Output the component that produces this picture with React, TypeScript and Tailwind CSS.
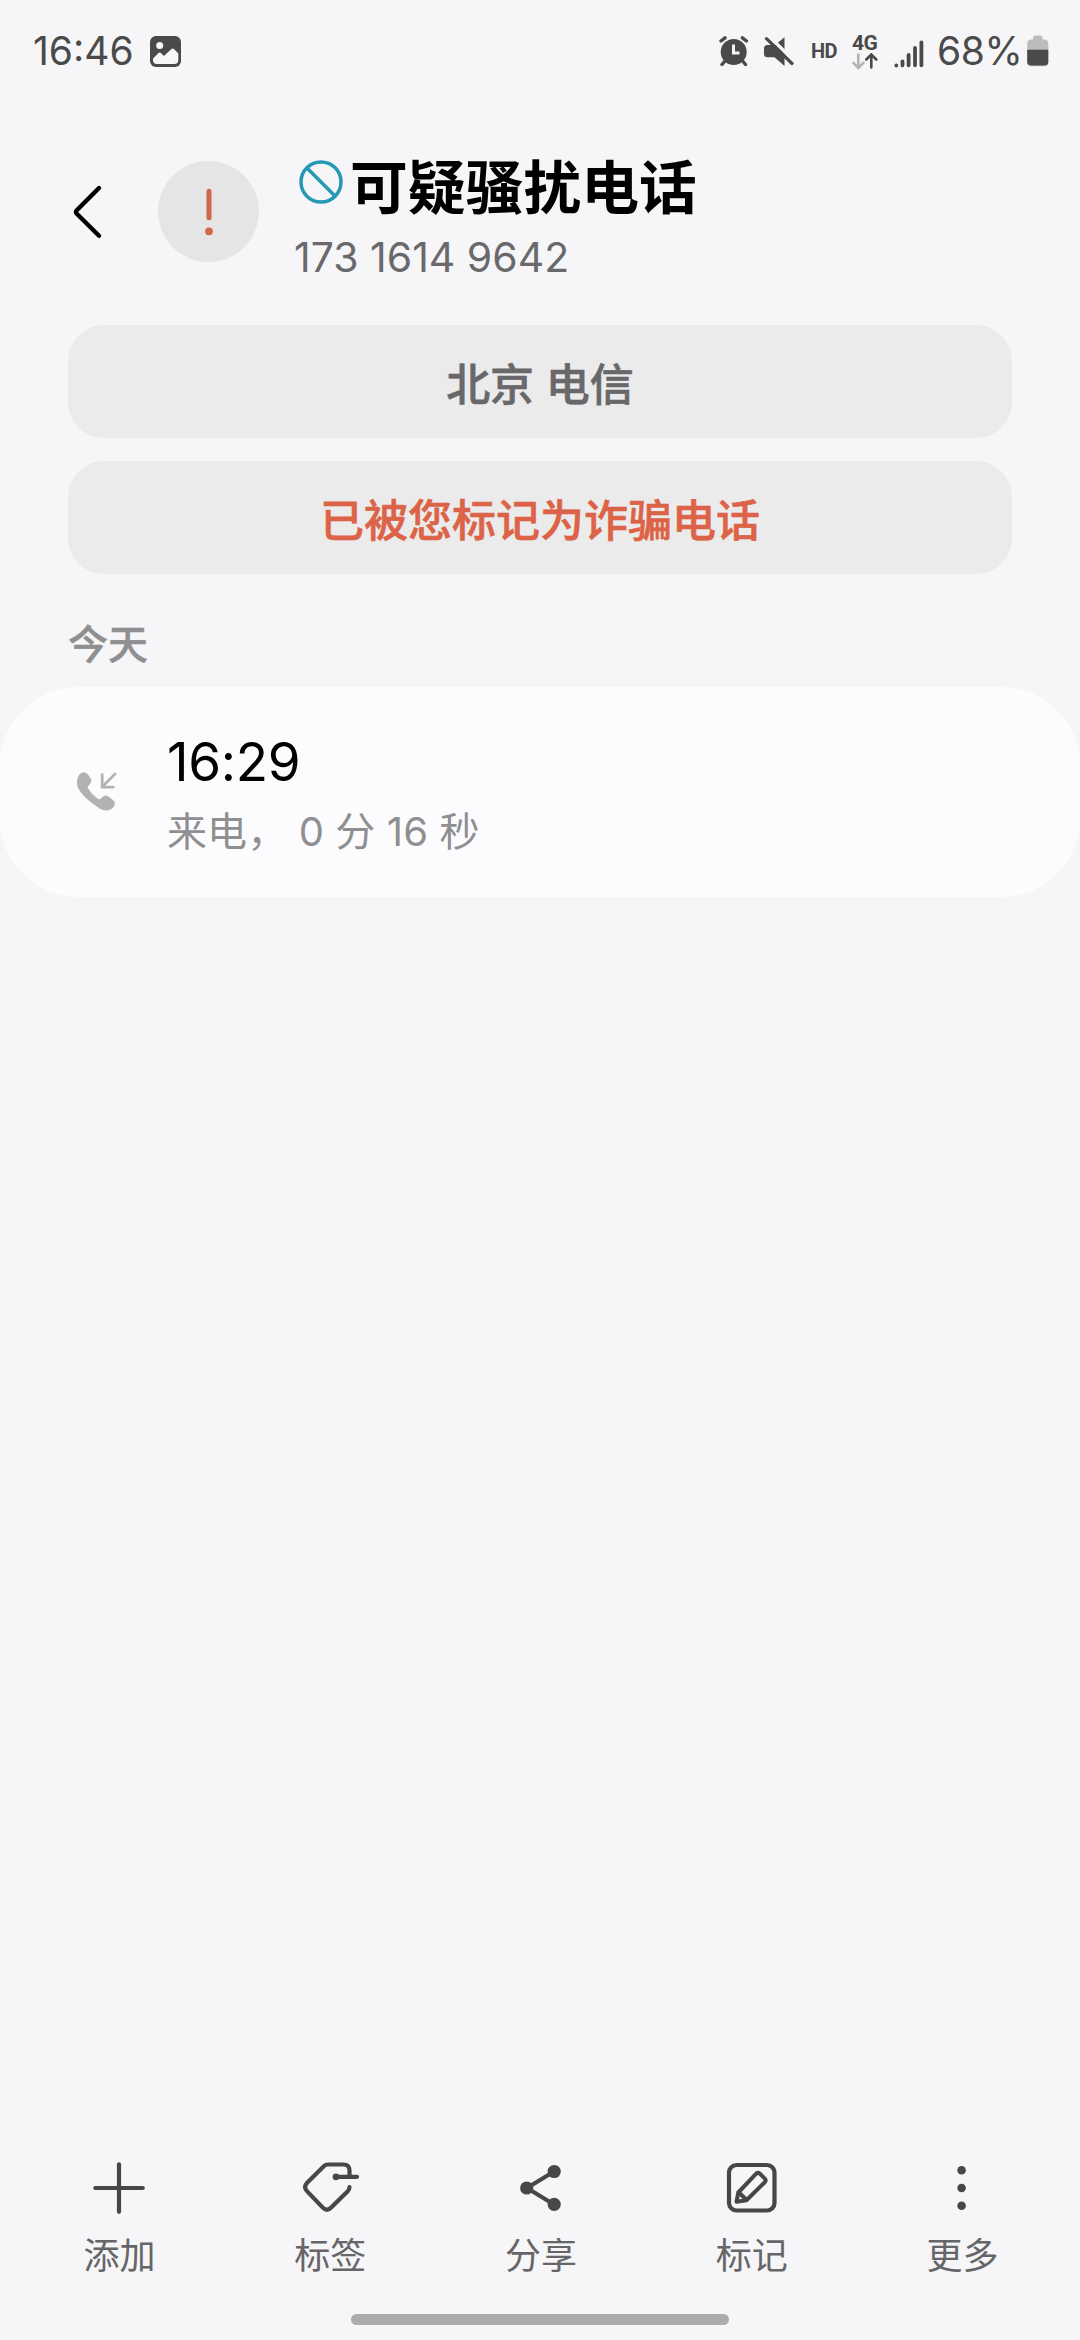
import type { ReactNode } from 'react';

const actions: { label: string; icon: ReactNode }[] = [
  {
    label: '添加',
    icon: <path d="M6.3 30h47.5M30 6.3v47.5" />,
  },
  {
    label: '标签',
    icon: (
      <>
        <path d="M49.5 18v-5.5q0-6-6-6H28q-2.5 0-4.2 1.7L7.2 24.8q-4.2 4.2 0 8.6l15.6 16.2q4.2 4.2 8.4 0l16.3-16q2-2 2-4.6" />
        <path d="M36 18.8h21" />
        <circle cx="36" cy="18.8" r="3.4" fill="currentColor" stroke="none" />
      </>
    ),
  },
  {
    label: '分享',
    icon: (
      <>
        <path d="M43 13.5 16 30l27 16.5" />
        <g fill="currentColor" stroke="none">
          <circle cx="43.2" cy="13.5" r="6.6" />
          <circle cx="15.7" cy="30" r="6.6" />
          <circle cx="43.2" cy="46.3" r="6.6" />
        </g>
      </>
    ),
  },
  {
    label: '标记',
    icon: (
      <>
        <rect x="7" y="7" width="45.5" height="45.5" rx="7.5" />
        <path
          d="M14.5 43.8 16.3 34.5 34.2 15.6q1.8-1.5 3.6 0l5 5q1.6 1.8 0 3.6L24.5 42.2ZM16.5 34l8 8"
          strokeWidth="4"
        />
      </>
    ),
  },
  {
    label: '更多',
    icon: (
      <g fill="currentColor" stroke="none">
        <circle cx="28.6" cy="12.2" r="4.3" />
        <circle cx="28.6" cy="30" r="4.3" />
        <circle cx="28.6" cy="47.7" r="4.3" />
      </g>
    ),
  },
];

function StatusBar() {
  return (
    <div className="flex h-[102px] items-center pl-[33px] pr-[31px] text-[#4a4a4a]">
      <span className="w-[117px] whitespace-nowrap text-[39px] leading-[48px]">16:46</span>
      <svg className="mt-px h-8 w-8" viewBox="0 0 32 32">
        <rect width="31" height="31" rx="6" fill="currentColor" />
        <circle cx="9.7" cy="9.5" r="3.5" fill="#f6f6f8" />
        <path
          d="M3 22.5 8.5 17q1.2-1 2.4 0l3 3 7.6-7q1.3-1 2.5 0l4.3 4.5V24q0 4-4 4H7q-4 0-4-4Z"
          fill="#f6f6f8"
        />
      </svg>
      <div className="ml-auto flex items-center">
        {/* Alarm */}
        <svg className="h-8 w-[30px]" viewBox="0 0 30 32">
          <circle cx="14.7" cy="17" r="13" fill="currentColor" />
          <path
            d="M2 6 6 2.8M27.4 6l-4-3.2M5.5 26.5 3 29.5M24 26.5l2.5 3"
            stroke="currentColor"
            strokeWidth="3.4"
            strokeLinecap="round"
          />
          <path d="M14.5 9.5v8.6h6" fill="none" stroke="#f6f6f8" strokeWidth="3" />
        </svg>
        {/* Mute */}
        <svg className="ml-[14px] h-8 w-[31px]" viewBox="0 0 31 32">
          <path d="M12 10 21.5 2.2V31L11.5 22.3H4.5q-3.5 0-3.5-3.5v-5.3Q1 10 4.5 10Z" fill="currentColor" />
          <path d="M5.5 .5 31 26" stroke="#f6f6f8" strokeWidth="3.4" />
          <path d="M3.5 3.7 29 28.5" stroke="currentColor" strokeWidth="3.2" strokeLinecap="round" />
        </svg>
        <span className="ml-[17px] w-[29px] font-[Roboto] text-[20px] font-bold leading-6 tracking-[-0.6px]">HD</span>
        {/* Mobile data */}
        <div className="ml-[12px] flex w-[28px] flex-col">
          <span className="font-[Roboto] text-[21px] font-bold leading-[20px] tracking-[-0.6px]">4G</span>
          <svg className="h-[17px] w-[26px]" viewBox="0 0 26 17" fill="none" strokeWidth="2.6" strokeLinecap="round">
            <path d="M6.3 1.5v13M1.3 9.8l5 5 5-5" stroke="#b4b4b6" />
            <path d="M19.3 14.5v-13M14.3 6.5l5-5 5 5" stroke="currentColor" />
          </svg>
        </div>
        {/* Signal */}
        <svg
          className="ml-[14px] mt-[3px] h-8 w-[31px]"
          viewBox="0 0 31 32"
          stroke="currentColor"
          strokeWidth="3.8"
          strokeLinecap="round"
        >
          <path d="M2.3 28.3v.2M8.5 24.3v4M14.6 18v10.3M21 11v17.3M27.4 5.3v23" />
        </svg>
        <span className="ml-[12px] w-[90px] whitespace-nowrap text-[39px] leading-[48px] tracking-[-0.4px]">68%</span>
        {/* Battery */}
        <svg className="h-8 w-[22px]" viewBox="0 0 22 32">
          <path
            d="M6 3q0-2.5 2.5-2.5h4.6q2.4 0 2.4 2.5v1.5H17q4.3 0 4.3 4.3V27q0 4.3-4.3 4.3H4.5Q.2 31.3.2 27V8.8Q.2 4.5 4.5 4.5H6Z"
            fill="#bcbcbe"
          />
          <path d="M.2 14.8h21.1V27q0 3.5-4.3 3.5H4.5Q.2 30.5.2 27Z" fill="currentColor" />
        </svg>
      </div>
    </div>
  );
}

export default function App() {
  return (
    <div className="flex h-[2340px] w-[1080px] flex-col overflow-hidden bg-[#f6f6f8] font-['Inter','Noto_Sans_CJK_SC',sans-serif]">
      <StatusBar />

      {/* Contact header */}
      <header className="flex h-[223px] items-start pl-[68px] pt-[43px]">
        <svg className="mt-[39px] h-[56px] w-9" viewBox="0 0 36 56" fill="none" stroke="#000" strokeWidth="4.4">
          <path d="M31 4 8.8 26.2q-1.6 1.8 0 3.6L31 51.8" strokeLinecap="round" strokeLinejoin="round" />
        </svg>
        <div className="ml-[54px] mt-[16px] flex size-[101px] items-center justify-center rounded-full bg-[#e5e5e5]">
          <svg className="h-12 w-4" viewBox="0 0 16 48">
            <path d="M8 3.3v26.5" stroke="#d0664a" strokeWidth="5" strokeLinecap="round" />
            <circle cx="8" cy="43.3" r="3.9" fill="#d0664a" />
          </svg>
        </div>
        <div className="ml-[35px]">
          <div className="flex h-[86px] items-center">
            <svg className="-mt-[13px] ml-[4px] size-[46px]" viewBox="0 0 46 46" fill="none" stroke="#2599b4" strokeWidth="3.5">
              <circle cx="23" cy="23" r="20" />
              <path d="m9 9 28 28" />
            </svg>
            <h1 className="ml-[6px] text-[57.8px] font-bold leading-[86px]">可疑骚扰电话</h1>
          </div>
          <p className="mt-px text-[41px] leading-[50px] text-[#69696b]">173 1614 9642</p>
        </div>
      </header>

      <section className="flex flex-col gap-[23px] px-[68px] text-center text-[44px] font-medium leading-[121px] [-webkit-text-stroke:0.6px]">
        <div className="h-[113px] rounded-[36px] bg-[#ebebeb] text-[#68686a]">北京 电信</div>
        <div className="h-[113px] rounded-[36px] bg-[#ebebeb] text-[#dc6347]">已被您标记为诈骗电话</div>
      </section>

      <h2 className="h-[113px] pl-[68px] pt-[41px] text-[40px] font-medium leading-[60px] text-[#8f8f91] [-webkit-text-stroke:0.5px]">
        今天
      </h2>

      {/* Call record */}
      <section className="flex h-[210px] items-center rounded-[78px] bg-[#fcfcfe] pl-[75px]">
        <svg className="h-[42px] w-[44px]" viewBox="0 0 44 42">
          <path
            d="M9.2 1.3q2.4 0 4.3 3l2.4 3.6q1.4 2.4-.6 4.7l-2 2.3q-1 1.3-.2 2.7 3.8 6.4 9.8 10.3 1.5.9 2.7-.2l2.9-2.5q2.2-1.6 4.5 0l4.4 3.2q3.3 2.5 2.2 5.3-1.6 4.4-6 5.5-4.6 1.3-9-1.7Q7.6 26.5 3.2 17.3 1 12 2.6 7.2 4.4 1.5 9.2 1.3Z"
            fill="#b1b2b3"
          />
          <path d="m40 3-13 13M27.2 3.5v12.7h11" fill="none" stroke="#b1b2b3" strokeWidth="2.7" strokeLinecap="round" />
        </svg>
        <div className="ml-[48px] mt-1">
          <div className="text-[53px] leading-[70px] tracking-[-0.3px] text-black">16:29</div>
          <div className="mt-[5px] whitespace-pre text-[40px] leading-[60px] tracking-[0.1px] text-[#8f8f91]">
            来电， 0 分 16 秒
          </div>
        </div>
      </section>

      {/* Bottom actions */}
      <nav className="mt-auto flex pl-[14px] pr-[12px]">
        {actions.map(({ label, icon }) => (
          <button key={label} className="flex flex-1 flex-col items-center text-[#474749]">
            <svg
              className="size-[60px]"
              viewBox="0 0 60 60"
              fill="none"
              stroke="currentColor"
              strokeWidth="4.2"
              strokeLinecap="round"
              strokeLinejoin="round"
            >
              {icon}
            </svg>
            <span className="mt-[11px] text-[36px] leading-[54px] text-[#666668]">{label}</span>
          </button>
        ))}
      </nav>
      <div className="mx-auto mb-[15px] mt-[31px] h-[11px] w-[378px] shrink-0 rounded-full bg-[#acacac]" />
    </div>
  );
}
